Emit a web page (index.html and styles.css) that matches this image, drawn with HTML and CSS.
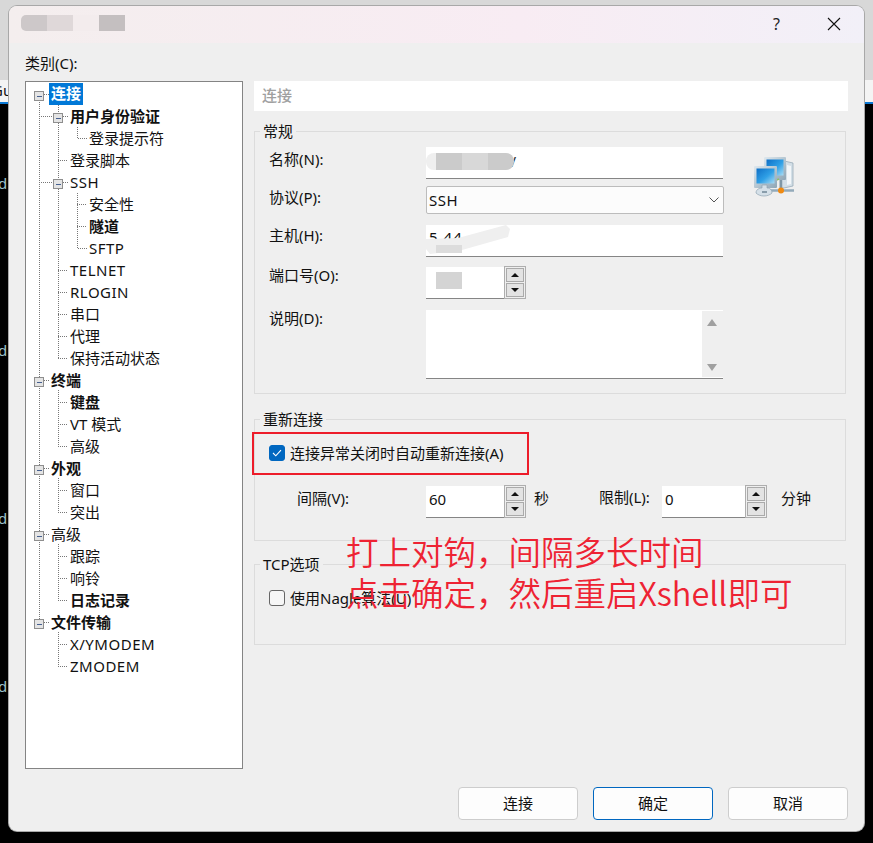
FILE: index.html
```html
<!DOCTYPE html>
<html lang="zh-CN">
<head>
<meta charset="utf-8">
<title>连接属性</title>
<link rel="stylesheet" href="styles.css">
</head>
<body>
<div class="desktop">
  <div class="back back-top"></div>
  <div class="back back-tab">Gu</div>
  <div class="back back-term">
    <span class="term-char c1">d</span><span class="term-char c2">d</span><span class="term-char c3">d</span><span class="term-char c4">d</span>
  </div>
  <div class="dialog">
    <header class="titlebar">
      <div class="redact-title"><i class="rt a"></i><i class="rt b"></i><i class="rt c"></i><i class="rt d"></i></div>
      <span class="help">?</span>
      <svg class="close" width="14" height="14" viewBox="0 0 14 14"><path d="M1 1L13 13M13 1L1 13" stroke="#111" stroke-width="1.1" fill="none"/></svg>
    </header>
    <div class="content">
      <aside class="side">
        <div class="side-label">类别(C):</div>
        <div class="tree">
          <svg class="tree-lines" width="216" height="686" viewBox="26 82 216 686">
            <g class="dots">
              <path d="M39.5 100V622M44 94.5H49M44 380.5H50M44 468.5H50M44 534.5H50M44 622.5H50"/>
              <path d="M58.5 105V358M63 116.5H68M58 160.5H68M63 182.5H68M58 270.5H68M58 292.5H68M58 314.5H68M58 336.5H68M58 358.5H68"/>
              <path d="M39 116.5H53M39 182.5H53"/>
              <path d="M77.500 127V138.500H87M77.500 193V248.500H87M77 204.500H87M77 226.500H87"/>
              <path d="M58.5 390V446M58 402.5H68M58 424.5H68M58 446.5H68"/>
              <path d="M58.5 478V512M58 490.5H68M58 512.5H68"/>
              <path d="M58.5 544V600M58 556.5H68M58 578.5H68M58 600.5H68"/>
              <path d="M58.5 632V666M58 644.5H68M58 666.5H68"/>
            </g>
            <g class="boxes">
              <rect x="34.5" y="91.5" width="9" height="9"/><path d="M36.5 96H41.5"/>
              <rect x="53.5" y="113.5" width="9" height="9"/><path d="M55.5 118H60.5"/>
              <rect x="53.5" y="179.5" width="9" height="9"/><path d="M55.5 184H60.5"/>
              <rect x="34.5" y="377.5" width="9" height="9"/><path d="M36.5 382H41.5"/>
              <rect x="34.5" y="465.5" width="9" height="9"/><path d="M36.5 470H41.5"/>
              <rect x="34.5" y="531.5" width="9" height="9"/><path d="M36.5 536H41.5"/>
              <rect x="34.5" y="619.5" width="9" height="9"/><path d="M36.5 624H41.5"/>
            </g>
          </svg>
          <ul class="tree-list">
            <li class="l0 b"><span class="sel">连接</span></li>
            <li class="l1 b">用户身份验证</li>
            <li class="l2">登录提示符</li>
            <li class="l1">登录脚本</li>
            <li class="l1 lat">SSH</li>
            <li class="l2">安全性</li>
            <li class="l2 b">隧道</li>
            <li class="l2 lat">SFTP</li>
            <li class="l1 lat">TELNET</li>
            <li class="l1 lat">RLOGIN</li>
            <li class="l1">串口</li>
            <li class="l1">代理</li>
            <li class="l1">保持活动状态</li>
            <li class="l0 b">终端</li>
            <li class="l1 b">键盘</li>
            <li class="l1">VT 模式</li>
            <li class="l1">高级</li>
            <li class="l0 b">外观</li>
            <li class="l1">窗口</li>
            <li class="l1">突出</li>
            <li class="l0">高级</li>
            <li class="l1">跟踪</li>
            <li class="l1">响铃</li>
            <li class="l1 b">日志记录</li>
            <li class="l0 b">文件传输</li>
            <li class="l1 lat">X/YMODEM</li>
            <li class="l1 lat">ZMODEM</li>
          </ul>
        </div>
      </aside>
      <main class="panel">
        <div class="panel-head">连接</div>
        <section class="group group-general">
          <div class="legend">常规</div>
          <div class="form">
            <label class="flabel lb-name">名称(N):</label>
            <div class="field f-name"><span class="name-tx">V</span><i class="blob blob-name0"></i><i class="blob blob-name"></i><i class="blob blob-name2"></i></div>
            <svg class="netico" width="42" height="42" viewBox="0 0 42 42">
              <defs>
                <linearGradient id="scr" x1="0" y1="0" x2="1" y2="1"><stop offset="0" stop-color="#0f6fc6"/><stop offset=".55" stop-color="#2fa0e6"/><stop offset="1" stop-color="#a8dcf5"/></linearGradient>
                <linearGradient id="frm" x1="0" y1="0" x2="1" y2="1"><stop offset="0" stop-color="#dfe8ee"/><stop offset="1" stop-color="#8ea6b6"/></linearGradient>
              </defs>
              <path d="M26 4L39 7V30L30 32H26Z" fill="#d3dfe7" stroke="#8fa3b1" stroke-width=".7"/>
              <path d="M33 9L37 10V28L33 29Z" fill="#f2f6f9"/>
              <rect x="10" y="1" width="22" height="23" rx="1" fill="url(#frm)"/>
              <rect x="12.500" y="3.500" width="17" height="16" fill="url(#scr)"/>
              <path d="M14 34.500H40" stroke="#93aaba" stroke-width="2.500"/>
              <path d="M27 24V33" stroke="#7f97a6" stroke-width="2.500"/>
              <path d="M18 26L25 23" stroke="#8fc06a" stroke-width="1.500"/>
              <rect x="0" y="10" width="23" height="22" rx="1" fill="url(#frm)"/>
              <rect x="2.500" y="12.500" width="18" height="15" fill="url(#scr)"/>
              <path d="M2 37C2 33 6 32 8 32V29H13V32C15 32 18 33 18 37C14 41 6 41 2 37Z" fill="#d5e0e8" stroke="#8fa3b1" stroke-width=".7"/>
              <path d="M8 36H13" stroke="#6f8797" stroke-width="1.500"/>
              <circle cx="27" cy="34.500" r="3" fill="#ef8a12"/>
            </svg>
            <label class="flabel lb-proto">协议(P):</label>
            <div class="field f-select"><span class="lat">SSH</span><svg class="chev" width="10" height="6" viewBox="0 0 10 6"><path d="M.5 .5L5 5L9.500 .5" fill="none" stroke="#555"/></svg></div>
            <label class="flabel lb-host">主机(H):</label>
            <div class="field f-host"><span class="host-tx">5.44</span><i class="blob blob-host"></i><i class="blob blob-host2"></i></div>
            <label class="flabel lb-port">端口号(O):</label>
            <div class="spin-wrap f-port">
              <div class="field spin-input"><i class="blob blob-port"></i></div>
              <div class="spin"><span class="spin-btn"><i class="up"></i></span><span class="spin-btn"><i class="down"></i></span></div>
            </div>
            <label class="flabel lb-desc">说明(D):</label>
            <div class="field f-desc">
              <div class="scroll"><i class="up"></i><i class="down"></i></div>
            </div>
          </div>
        </section>
        <section class="group group-reconnect">
          <div class="legend">重新连接</div>
          <div class="check-row check-a"><span class="check on"><svg width="10" height="8" viewBox="0 0 10 8"><path d="M1 4L3.800 6.800L9 1.200" fill="none" stroke="#fff" stroke-width="1.100"/></svg></span><span>连接异常关闭时自动重新连接(A)</span></div>
          <div class="interval">
            <label class="ilabel">间隔(V):</label>
            <div class="spin-wrap"><div class="field spin-input">60</div><div class="spin"><span class="spin-btn"><i class="up"></i></span><span class="spin-btn"><i class="down"></i></span></div></div>
            <span class="unit">秒</span>
            <label class="ilabel2">限制(L):</label>
            <div class="spin-wrap limit"><div class="field spin-input">0</div><div class="spin"><span class="spin-btn"><i class="up"></i></span><span class="spin-btn"><i class="down"></i></span></div></div>
            <span class="unit unit2">分钟</span>
          </div>
        </section>
        <section class="group group-tcp">
          <div class="legend">TCP选项</div>
          <div class="check-row check-b"><span class="check"></span><span>使用Nagle算法(U)</span></div>
        </section>
      </main>
    </div>
    <footer class="footer">
      <button class="btn">连接</button>
      <button class="btn primary">确定</button>
      <button class="btn">取消</button>
    </footer>
    <div class="red-box"></div>
    <div class="note">打上对钩，间隔多长时间<br>点击确定，然后重启Xshell即可</div>
  </div>
</div>
</body>
</html>
```
FILE: styles.css
```css
* { box-sizing: border-box; }
html, body { margin: 0; padding: 0; background: #000; }
body { font-family: "Noto Sans", "Noto Sans CJK SC", sans-serif; font-size: 15px; color: #111; }
.desktop { position: relative; width: 873px; height: 843px; overflow: hidden; background: #000; }
.back { position: absolute; left: 0; width: 873px; }
.back-top { top: 0; height: 80px; background: #d8d8d8; }
.back-tab { top: 80px; height: 24px; background: #f4f4f4; border-bottom: 2px solid #0a78d4; font-size: 15px; line-height: 20px; text-indent: -8px; }
.back-term { top: 104px; height: 739px; background: #000; }
.term-char { position: absolute; left: -2px; color: #9fc4cc; font-size: 15px; line-height: 20px; }
.c1 { top: 69px; } .c2 { top: 236px; } .c3 { top: 404px; } .c4 { top: 572px; }

.dialog { position: absolute; left: 9px; top: 6px; width: 855px; height: 825px; background: #efefef; border-radius: 8px; box-shadow: 0 0 0 1px #a8a8a8; display: flex; flex-direction: column; overflow: hidden; }
.titlebar { flex: none; height: 37px; background: linear-gradient(90deg, #f4eeee 0%, #f8ecf3 60%, #f2f0f8 100%); display: flex; align-items: center; padding-right: 23px; }
.redact-title { display: flex; margin-left: 12px; height: 16px; margin-top: -3px; }
.rt { display: block; width: 26px; height: 16px; }
.rt.a { background: #cdc8c9; border-radius: 5px 0 0 5px; }
.rt.b { background: #dfd8d9; }
.rt.c { background: #f3eced; }
.rt.d { background: #c4bfc0; }
.help { margin-left: auto; margin-right: 47px; font-size: 16px; line-height: 20px; color: #222; margin-top: -2px; }
.close { display: block; margin-top: -1px; }

.content { flex: none; display: flex; height: 744px; }
.side { width: 234px; padding-left: 16px; flex: none; }
.side-label { height: 38px; padding-top: 9px; line-height: 22px; }
.tree { position: relative; width: 218px; height: 688px; background: #fff; border: 1px solid #848484; }
.tree-lines { position: absolute; left: 0; top: 0; }
.dots path { fill: none; stroke: #777; stroke-width: 1; stroke-dasharray: 1 1; shape-rendering: crispEdges; }
.boxes rect { fill: #e4e4e4; stroke: #8e8e8e; stroke-width: 1; shape-rendering: crispEdges; }
.boxes path { fill: none; stroke: #46608f; stroke-width: 1; shape-rendering: crispEdges; }
.tree-list { list-style: none; margin: 0; padding: 1px 0 0; position: relative; }
.tree-list li { height: 22px; line-height: 22px; white-space: nowrap; color: #111; }
.l0 { padding-left: 25px; } .l1 { padding-left: 44px; } .l2 { padding-left: 63px; }
.b { font-weight: 700; }
.lat { letter-spacing: .5px; }
.sel { display: inline-block; height: 22px; line-height: 20px; background: #0078d7; color: #fff; padding: 0 2px; margin-left: -2px; vertical-align: top; }

.panel { flex: none; width: 594px; margin-left: 11px; padding-top: 38px; }
.panel-head { height: 30px; background: #fff; color: #a0a0a0; font-weight: 500; line-height: 28px; padding-left: 8px; }
.group { width: 592px; border: 1px solid #dcdcdc; padding: 0 0 0 14px; }
.legend { width: fit-content; margin-left: -9px; margin-top: -12px; padding: 0 3px; line-height: 22px; height: 22px; background: #efefef; }
.group-general { margin-top: 20px; height: 263px; }
.group-reconnect { margin-top: 25px; height: 122px; }
.group-tcp { margin-top: 23px; height: 81px; }

.form { display: grid; grid-template-columns: 157px 298px 42px; grid-template-rows: 32px 28px 32px 33px 69px; row-gap: 7px; margin-top: 5px; align-items: start; }
.group-general .form > .f-host { margin-top: 4px; }
.flabel { line-height: 22px; }
.lb-name { grid-row: 1; margin-top: 1px; }
.lb-proto { grid-row: 2; }
.lb-host { grid-row: 3; margin-top: 3px; }
.lb-port { grid-row: 4; margin-top: 4px; }
.lb-desc { grid-row: 5; margin-top: 7px; }
.field { position: relative; background: #fff; border-bottom: 1px solid #858585; overflow: hidden; }
.f-name { grid-row: 1; grid-column: 2; height: 32px; width: 297px; }
.f-select { grid-row: 2; grid-column: 2; height: 28px; border: 1px solid #bcbcbc; border-radius: 2px; background: #fcfcfc; line-height: 26px; padding-left: 2px; position: relative; }
.f-host { grid-row: 3; grid-column: 2; height: 32px; width: 297px; }
.f-port { grid-row: 4; grid-column: 2; margin-top: 6px; }
.f-desc { grid-row: 5; grid-column: 2; height: 69px; width: 297px; margin-top: 10px; }
.netico { grid-row: 1 / span 2; grid-column: 3; margin: 9px 0 0 30px; }
.chev { position: absolute; right: 4px; top: 10px; }
.host-tx { position: absolute; left: 3px; top: 0; line-height: 24px; letter-spacing: 1px; }
.name-tx { position: absolute; left: 81px; top: 2px; line-height: 24px; color: #333; }
.blob { position: absolute; display: block; }
.blob-name0 { left: 0; top: 6px; width: 30px; height: 17px; background: #efefef; border-radius: 8px 0 0 8px; }
.blob-name { left: 10px; top: 6px; width: 78px; height: 17px; background: #cbcbcb; border-radius: 0 8px 8px 0; }
.blob-name2 { left: 36px; top: 6px; width: 26px; height: 17px; background: #d8d8d8; }
.blob-host { left: 0; top: 0; width: 84px; height: 29px; background: #efefef; clip-path: polygon(0 14px, 32px 13px, 80px 0, 84px 4px, 82px 12px, 36px 25px, 4px 29px, 0 24px); }
.blob-host2 { left: 10px; top: 20px; width: 26px; height: 8px; background: #dcdcdc; }
.blob-port { left: 10px; top: 5px; width: 26px; height: 17px; background: #d4d4d4; }
.scroll { position: absolute; right: 0; top: 0; width: 21px; height: 67px; background: #efefef; border-top: 1px solid #fff; }
.scroll .up { position: absolute; left: 5px; top: 8px; border: 5px solid transparent; border-top: 0; border-bottom: 7px solid #a0a0a0; }
.scroll .down { position: absolute; left: 5px; bottom: 6px; border: 5px solid transparent; border-bottom: 0; border-top: 7px solid #a0a0a0; }

.spin-wrap { display: flex; height: 33px; align-items: flex-start; flex: none; }
.spin-input { width: 78px; height: 32px; margin-top: 1px; line-height: 26px; padding-left: 3px; }
.spin { width: 22px; height: 33px; border: 1px solid #aeaeae; background: #efefef; padding: 1px 1px; display: flex; flex-direction: column; gap: 1px; }
.spin-btn { flex: 1; background: #e3e3e3; border: 1px solid #aaa; display: flex; align-items: center; justify-content: center; }
.spin-btn .up { border: 4px solid transparent; border-top: 0; border-bottom: 4px solid #111; }
.spin-btn .down { border: 4px solid transparent; border-bottom: 0; border-top: 4px solid #111; }

.check-row { display: flex; align-items: center; line-height: 22px; }
.check { width: 16px; height: 16px; border-radius: 3px; border: 1px solid #666; background: #f6f6f6; margin-right: 5px; flex: none; display: flex; align-items: center; justify-content: center; }
.check.on { background: #0067c0; border-color: #0067c0; }
.check-a { margin-top: 12px; }
.check-b { margin-top: 12px; }
.interval { display: flex; align-items: flex-start; margin-top: 21px; line-height: 22px; }
.ilabel { margin-left: 28px; width: 129px; padding-top: 2px; }
.unit { margin-left: 8px; padding-top: 2px; width: 65px; }
.ilabel2 { width: 63px; padding-top: 1px; }
.limit .spin-input { width: 83px; }
.unit2 { margin-left: 14px; width: 40px; }

.footer { flex: 1; display: flex; justify-content: flex-end; gap: 15px; padding: 0 16px 0 0; }
.btn { width: 120px; height: 33px; background: #fdfdfd; border: 1px solid #cdcdcd; border-radius: 4px; font: inherit; color: #111; padding: 0 0 2px; }
.btn.primary { border-color: #0067c0; }

.red-box { position: absolute; left: 243px; top: 426px; width: 277px; height: 43px; border: 2px solid #ed1c2a; }
.note { position: absolute; left: 337px; top: 524px; font-size: 32.5px; line-height: 41px; color: #ee2333; white-space: nowrap; font-family: "Noto Sans CJK SC", "Noto Sans", sans-serif; font-weight: 350; }
```
